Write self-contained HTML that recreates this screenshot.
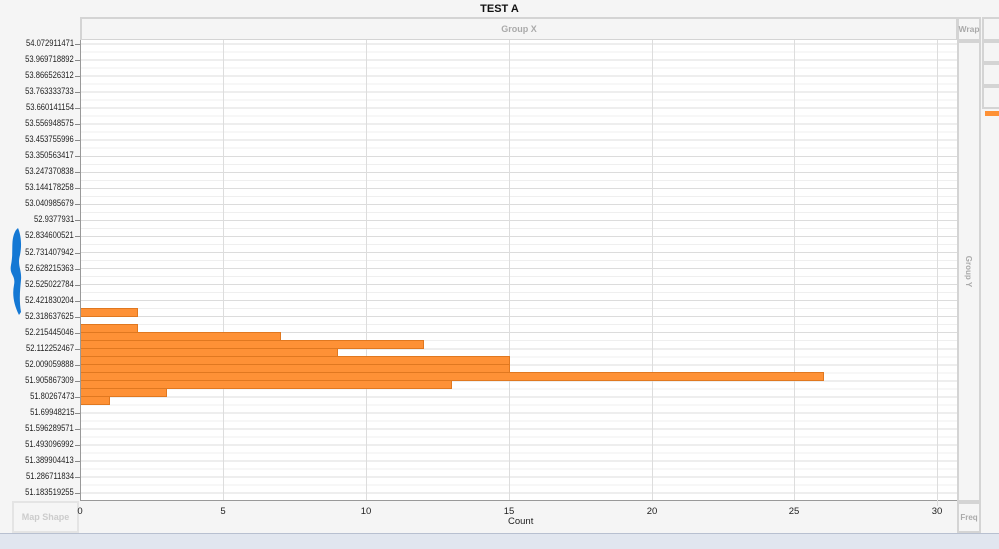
<!DOCTYPE html><html><head><style>
body{margin:0;width:999px;height:548px;background:#f5f5f5;position:relative;overflow:hidden;font-family:"Liberation Sans",sans-serif}
.a{position:absolute}
.box{position:absolute;border:2px solid #d4d4d4;background:#f5f5f5;box-sizing:border-box;color:#aaa;font-size:9px;font-weight:bold;display:flex;align-items:center;justify-content:center}
.yl{position:absolute;right:925px;font-size:9.5px;color:#222;line-height:10px;white-space:nowrap;transform:scaleX(0.8);transform-origin:right center}
.tk{position:absolute;left:75px;width:5px;height:1px;background:#888}
.bar{position:absolute;left:81px;height:7px;background:#fe9136;border:1px solid #e07820;border-left:none}
.xl{position:absolute;top:506px;font-size:9.5px;color:#222;transform:translateX(-50%)}
</style></head><body>
<div class="a" style="left:0;width:999px;top:3px;text-align:center;font-size:11px;font-weight:bold;color:#111">TEST A</div>
<div class="box" style="left:80px;top:17px;width:878px;height:24px">Group X</div>
<div class="box" style="left:957px;top:17px;width:24px;height:24px;font-size:8.5px">Wrap</div>
<div class="box" style="left:982px;top:17px;width:20px;height:24px"></div>
<div class="box" style="left:982px;top:41px;width:20px;height:22px"></div>
<div class="box" style="left:982px;top:63px;width:20px;height:23px"></div>
<div class="box" style="left:982px;top:86px;width:20px;height:23px"></div>
<div class="a" style="left:985px;top:111px;width:14px;height:5px;background:#fe9136"></div>
<div class="box" style="left:957px;top:41px;width:24px;height:461px"><span style="transform:rotate(90deg);white-space:nowrap;font-size:8px">Group Y</span></div>
<div class="box" style="left:957px;top:502px;width:24px;height:31px;font-size:8px">Freq</div>
<div class="box" style="left:12px;top:501px;width:67px;height:32px;border-color:#e4e4e4;color:#ccc">Map Shape</div>
<div class="a" style="left:80px;top:40px;width:877px;height:461px;background-color:#fff;background-image:repeating-linear-gradient(to bottom,transparent 0,transparent 3.5px,#dcdcdc 3.5px,#dcdcdc 4.5px,transparent 4.5px,transparent 11.5px,#efefef 11.5px,#efefef 12.5px,transparent 12.5px,transparent 16.04px);border-left:1px solid #999;border-bottom:1px solid #999;box-sizing:border-box"></div>
<div class="a" style="left:223px;top:40px;width:1px;height:460px;background:#ddd"></div>
<div class="a" style="left:366px;top:40px;width:1px;height:460px;background:#ddd"></div>
<div class="a" style="left:509px;top:40px;width:1px;height:460px;background:#ddd"></div>
<div class="a" style="left:652px;top:40px;width:1px;height:460px;background:#ddd"></div>
<div class="a" style="left:794px;top:40px;width:1px;height:460px;background:#ddd"></div>
<div class="a" style="left:937px;top:40px;width:1px;height:466px;background:#ddd"></div>
<div class="bar" style="top:308px;width:56px"></div>
<div class="bar" style="top:324px;width:56px"></div>
<div class="bar" style="top:332px;width:199px"></div>
<div class="bar" style="top:340px;width:342px"></div>
<div class="bar" style="top:348px;width:256px"></div>
<div class="bar" style="top:356px;width:428px"></div>
<div class="bar" style="top:364px;width:428px"></div>
<div class="bar" style="top:372px;width:742px"></div>
<div class="bar" style="top:380px;width:370px"></div>
<div class="bar" style="top:388px;width:85px"></div>
<div class="bar" style="top:396px;width:28px"></div>
<div id="yl"></div>
<div class="xl" style="left:80px">0</div><div class="xl" style="left:223px">5</div><div class="xl" style="left:366px">10</div><div class="xl" style="left:509px">15</div><div class="xl" style="left:652px">20</div><div class="xl" style="left:794px">25</div><div class="xl" style="left:937px">30</div>
<div class="a" style="left:508px;top:516px;font-size:9.5px;color:#222">Count</div>
<svg class="a" style="left:0;top:220px" width="30" height="100"><path d="M16 10 C10 20 14 30 11 45 C9 55 16 55 14 65 C12 75 14 85 19 95 L21 92 C19 80 20 70 21 60 C22 50 17 45 20 35 C22 25 21 15 18 8 Z" fill="#1478d4"/></svg>
<div class="a" style="left:0;top:533px;width:999px;height:15px;background:#e1e6ef;border-top:1px solid #b8c0d0"></div>
<script>
var v=["54.072911471","53.969718892","53.866526312","53.763333733","53.660141154","53.556948575","53.453755996","53.350563417","53.247370838","53.144178258","53.040985679","52.9377931","52.834600521","52.731407942","52.628215363","52.525022784","52.421830204","52.318637625","52.215445046","52.112252467","52.009059888","51.905867309","51.80267473","51.69948215","51.596289571","51.493096992","51.389904413","51.286711834","51.183519255"];
var h="";v.forEach(function(s,i){var y=44+i*16.04;h+='<div class="yl" style="top:'+(y-5)+'px">'+s+'</div><div class="tk" style="top:'+Math.round(y)+'px"></div>';});
document.getElementById("yl").innerHTML=h;
</script>
</body></html>
